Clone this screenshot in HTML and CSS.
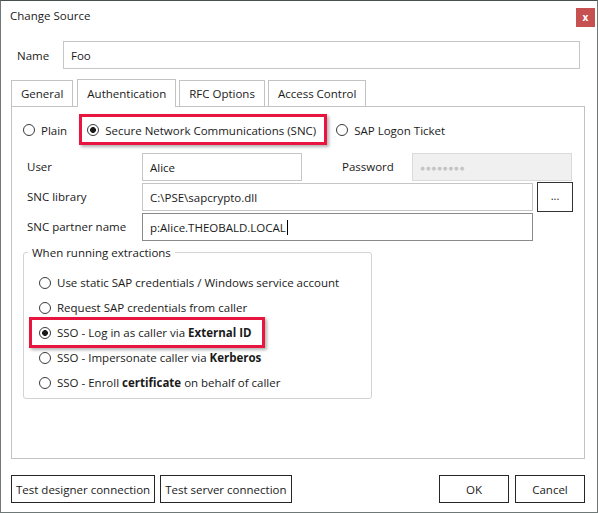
FILE: index.html
```html
<!DOCTYPE html>
<html lang="en">
<head>
<meta charset="utf-8">
<title>Change Source</title>
<link rel="stylesheet" href="styles.css">
</head>
<body>
<div class="window">
  <div class="titlebar">
    <span class="title">Change Source</span>
    <button class="close" type="button">x</button>
  </div>

  <div class="name-row">
    <span class="name-label">Name</span>
    <div class="input name-input">Foo</div>
  </div>

  <div class="tabs">
    <div class="tab">General</div>
    <div class="tab active">Authentication</div>
    <div class="tab">RFC Options</div>
    <div class="tab">Access Control</div>
  </div>

  <div class="panel">
    <div class="auth-modes">
      <label class="radio"><span class="dot"></span><span>Plain</span></label>
      <label class="radio checked hl hl-snc"><span class="dot"></span><span>Secure Network Communications (SNC)</span></label>
      <label class="radio"><span class="dot"></span><span>SAP Logon Ticket</span></label>
    </div>

    <div class="fields">
      <div class="field-row">
        <span class="field-label">User</span>
        <div class="input short">Alice</div>
        <span class="field-label pw-label">Password</span>
        <div class="input short disabled"><span class="pw-dots">●●●●●●●●</span></div>
      </div>
      <div class="field-row">
        <span class="field-label">SNC library</span>
        <div class="input long">C:\PSE\sapcrypto.dll</div>
        <button class="browse" type="button">...</button>
      </div>
      <div class="field-row">
        <span class="field-label">SNC partner name</span>
        <div class="input long focused">p:Alice.THEOBALD.LOCAL<span class="caret"></span></div>
      </div>
    </div>

    <fieldset class="group">
      <legend>When running extractions</legend>
      <label class="radio option"><span class="dot"></span><span>Use static SAP credentials / Windows service account</span></label>
      <label class="radio option"><span class="dot"></span><span>Request SAP credentials from caller</span></label>
      <label class="radio option checked hl hl-ext"><span class="dot"></span><span>SSO - Log in as caller via <b>External ID</b></span></label>
      <label class="radio option"><span class="dot"></span><span>SSO - Impersonate caller via <b>Kerberos</b></span></label>
      <label class="radio option"><span class="dot"></span><span>SSO - Enroll <b>certificate</b> on behalf of caller</span></label>
    </fieldset>
  </div>

  <div class="footer">
    <button class="btn btn-wide" type="button">Test designer connection</button>
    <button class="btn btn-wide" type="button">Test server connection</button>
    <span class="spacer"></span>
    <button class="btn btn-ok" type="button">OK</button>
    <button class="btn btn-ok" type="button">Cancel</button>
  </div>
</div>
</body>
</html>
```

FILE: styles.css
```css
* {
  box-sizing: border-box;
}

html, body {
  margin: 0;
  padding: 0;
  background: #ffffff;
}

body {
  font-family: "Open Sans", "Noto Sans", sans-serif;
  font-size: 11.5px;
  line-height: 15px;
  color: #1a1a1a;
}

.window {
  width: 598px;
  height: 513px;
  border: 1px solid #6f7777;
  border-top-color: #46504f;
  background: #ffffff;
  display: flex;
  flex-direction: column;
}

/* title bar */
.titlebar {
  height: 40px;
  display: flex;
  align-items: flex-start;
  padding-left: 9px;
}

.title {
  margin-top: 7px;
  font-size: 11.5px;
}

.close {
  margin-left: auto;
  margin-top: 7px;
  margin-right: 2px;
  width: 19px;
  height: 19px;
  padding: 0;
  border: none;
  background: #c75050;
  color: #ffffff;
  font-family: "Open Sans", sans-serif;
  font-weight: 700;
  font-size: 10px;
  line-height: 17px;
}

/* name row */
.name-row {
  display: flex;
  align-items: center;
  padding-left: 16px;
}

.name-label {
  width: 46px;
}

.input {
  height: 28px;
  border: 1px solid #c6c6c6;
  padding: 0 7px;
  display: flex;
  align-items: center;
  background: #ffffff;
  white-space: nowrap;
}

.name-input {
  width: 517px;
}

/* tabs */
.tabs {
  margin-top: 10px;
  padding-left: 10px;
  display: flex;
  align-items: flex-end;
  gap: 3px;
  height: 27px;
}

.tab {
  height: 26px;
  padding: 0 9px;
  border: 1px solid #c3c3c3;
  border-bottom: none;
  display: flex;
  align-items: center;
  background: #ffffff;
}

.tab.active {
  height: 28px;
  margin-bottom: -1px;
  margin-left: 1px;
  position: relative;
  z-index: 1;
}

/* panel */
.panel {
  margin-left: 10px;
  width: 574px;
  height: 353px;
  border: 1px solid #c3c3c3;
  padding-left: 11px;
}

.auth-modes {
  margin-top: 11px;
  height: 24px;
  display: flex;
  align-items: center;
  gap: 20px;
}

.radio {
  display: inline-flex;
  align-items: center;
  gap: 6px;
  height: 24px;
  white-space: nowrap;
}

.dot {
  width: 12px;
  height: 12px;
  border-radius: 50%;
  border: 1px solid #3a3a3a;
  background: #ffffff;
  flex: none;
}

.checked .dot {
  background: radial-gradient(circle, #1a1a1a 0 2.6px, #ffffff 3.2px);
}

.hl {
  position: relative;
}

.hl::after {
  content: "";
  position: absolute;
  border: 3px solid #e8163f;
  box-shadow: 2px 2px 3px rgba(0, 0, 0, 0.3);
  pointer-events: none;
}

.hl-snc::after {
  left: -8px;
  right: -11px;
  top: -4px;
  bottom: -3px;
}

.hl-ext::after {
  left: -10px;
  right: -14px;
  top: -3px;
  bottom: -3px;
}

/* fields */
.fields {
  margin-top: 11px;
  padding-left: 4px;
  display: flex;
  flex-direction: column;
  gap: 2px;
}

.field-row {
  display: flex;
  align-items: center;
  height: 28px;
}

.field-label {
  width: 115px;
  flex: none;
  margin-top: -2px;
}

.pw-label {
  margin-left: 40px;
  width: 70px;
}

.short {
  width: 160px;
}

.long {
  width: 391px;
}

.disabled {
  background: #f0f0f0;
  border-color: #dadada;
}

.pw-dots {
  color: #c4c4c4;
  font-size: 8.5px;
  letter-spacing: 0.5px;
}

.focused {
  border-color: #8a8a8a;
}

.caret {
  display: inline-block;
  width: 1px;
  height: 15px;
  background: #000000;
  margin-left: 1px;
}

.browse {
  margin-left: 4px;
  width: 36px;
  height: 30px;
  border: 1px solid #333333;
  background: #ffffff;
  font-family: inherit;
  font-size: 11px;
  padding: 0 0 4px;
  color: #1a1a1a;
}

/* group box */
.group {
  margin: 4px 0 0;
  width: 349px;
  border: 1px solid #d3d3d3;
  border-radius: 3px;
  padding: 10px 0 3px 15px;
  display: flex;
  flex-direction: column;
  align-items: flex-start;
}

.group legend {
  margin-left: -11px;
  padding: 0 4px;
}

.option {
  height: 25px;
}

.option b {
  font-weight: 700;
}

/* footer */
.footer {
  margin-top: 16px;
  padding: 0 12px 0 10px;
  display: flex;
  gap: 5px;
}

.spacer {
  flex: 1;
}

.btn {
  height: 28px;
  border: 1px solid #262626;
  background: #ffffff;
  font-family: inherit;
  font-size: 11.5px;
  color: #1a1a1a;
  padding: 0 4px;
}

.btn-ok {
  width: 70px;
  margin-left: 1px;
}
```
